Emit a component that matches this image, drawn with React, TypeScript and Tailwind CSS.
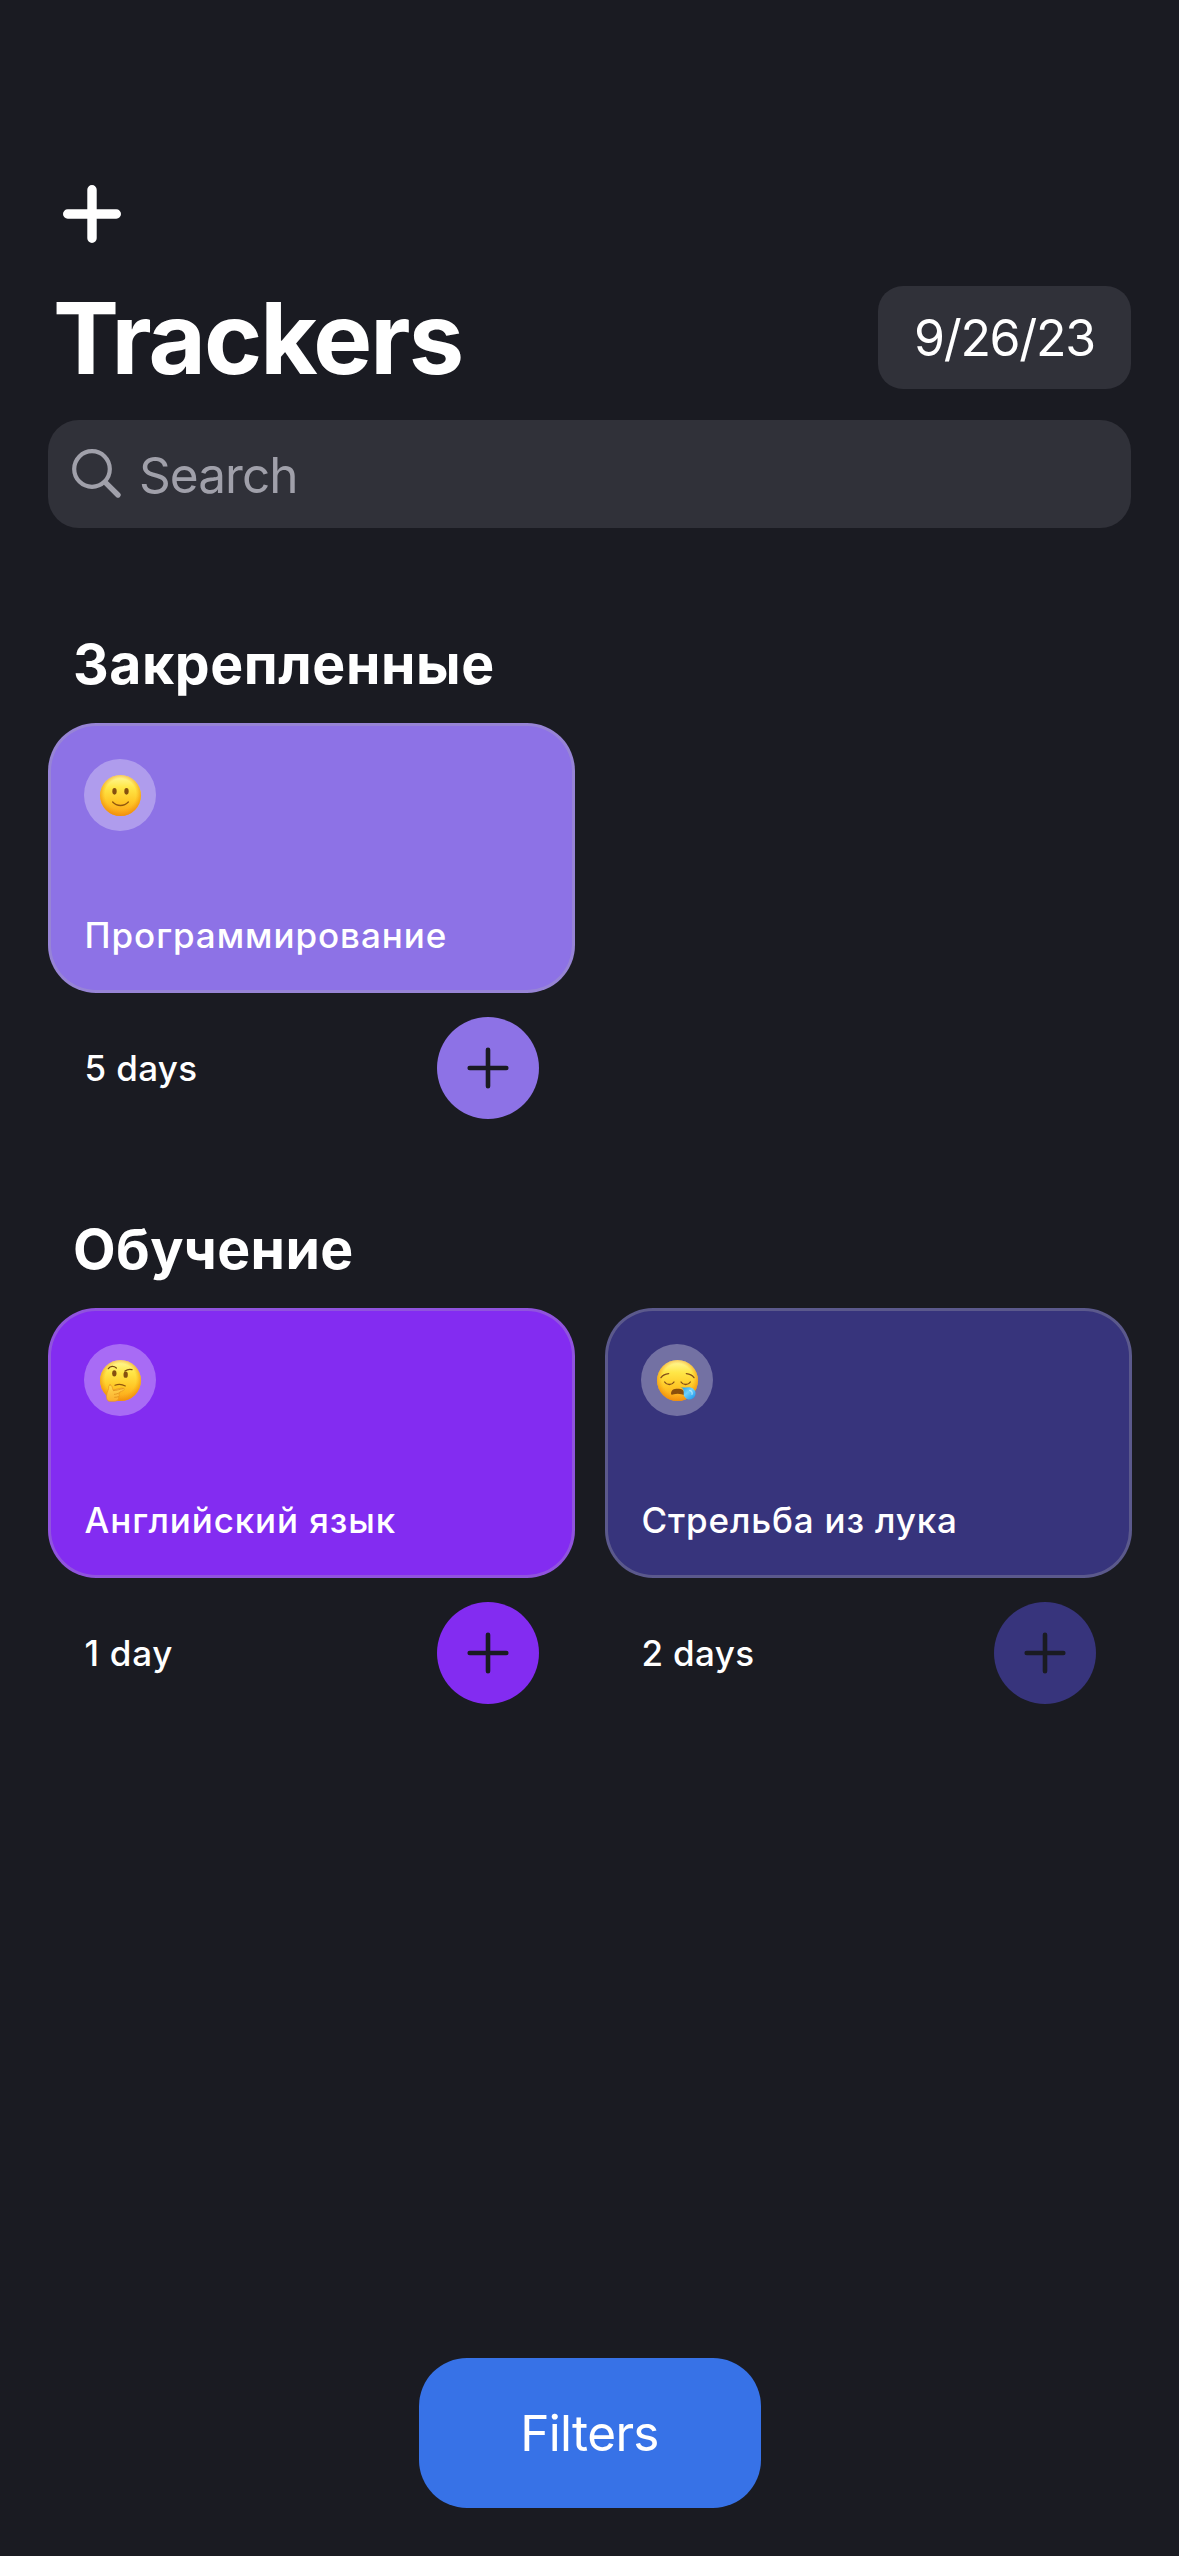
import React from "react";

type Mood = "smile" | "think" | "sleepy";

type Tracker = {
  name: string;
  nameClass: string;
  days: string;
  daysClass: string;
  mood: Mood;
  fill: string;
};

const pinned: Tracker[] = [
  {
    name: "Программирование",
    nameClass: "tracking-[0.93px]",
    days: "5 days",
    daysClass: "tracking-[0.36px]",
    mood: "smile",
    fill: "bg-[#8d72e6]",
  },
];

const study: Tracker[] = [
  {
    name: "Английский язык",
    nameClass: "tracking-[0.88px]",
    days: "1 day",
    daysClass: "tracking-[0.75px]",
    mood: "think",
    fill: "bg-[#832cf1]",
  },
  {
    name: "Стрельба из лука",
    nameClass: "tracking-[0.82px]",
    days: "2 days",
    daysClass: "tracking-[0.36px]",
    mood: "sleepy",
    fill: "bg-[#37347c]",
  },
];

function Face({ mood }: { mood: Mood }) {
  const base = `${mood}-base`;
  const edge = `${mood}-edge`;
  const tear = `${mood}-tear`;
  const hand = `${mood}-hand`;
  return (
    <svg viewBox="0 0 216 216" className="size-full" fill="none" strokeLinecap="round">
      <defs>
        <linearGradient id={base} x1="0" y1="0" x2="0" y2="1">
          <stop offset="0" stopColor="#fff9a0" />
          <stop offset="0.3" stopColor="#ffe748" />
          <stop offset="0.65" stopColor="#ffc726" />
          <stop offset="1" stopColor="#fb9f18" />
        </linearGradient>
        <radialGradient id={edge} cx="0.5" cy="0.47" r="0.54">
          <stop offset="0.7" stopColor="#f39a10" stopOpacity="0" />
          <stop offset="1" stopColor="#ee8a08" stopOpacity="0.85" />
        </radialGradient>
        <linearGradient id={tear} x1="0" y1="0" x2="1" y2="1">
          <stop offset="0" stopColor="#1f97ec" />
          <stop offset="0.45" stopColor="#6fd2fc" />
          <stop offset="1" stopColor="#128eea" />
        </linearGradient>
        <linearGradient id={hand} x1="0" y1="0" x2="0" y2="1">
          <stop offset="0" stopColor="#ffd84f" />
          <stop offset="1" stopColor="#fbae2c" />
        </linearGradient>
      </defs>
      <circle cx="109.5" cy="109.5" r="61.5" fill={`url(#${base})`} />
      <circle cx="109.5" cy="109.5" r="61.5" fill={`url(#${edge})`} />
      {mood === "smile" && (
        <>
          <ellipse cx="91.5" cy="97" rx="6.5" ry="10" fill="#85500f" />
          <ellipse cx="127.5" cy="97" rx="6.5" ry="10" fill="#85500f" />
          <path d="M86 129c13 14 34 14 47 0" stroke="#91570e" strokeWidth="4" />
        </>
      )}
      {mood === "think" && (
        <>
          <ellipse cx="91" cy="88" rx="6.5" ry="9.5" fill="#85500f" />
          <ellipse cx="125" cy="92" rx="6.5" ry="9.5" fill="#85500f" />
          <path d="M73 74c6-8 16-9 24-2M123 81c7-5 14-6 21-4" stroke="#7a4a10" strokeWidth="4" />
          <path d="M93 124c9-4 22-3 31 2" stroke="#91570e" strokeWidth="3.5" />
          <path
            d="M78 123c5-1 7 6 9 15 12-2 25-8 33-5 4 3-1 7-13 11 1 4-1 4-2 7 2 5 0 6-1 8 1 8-5 13-14 13H78c-9 0-11-8-10-18 1-12 7-17 6-25 0-3 1-6 4-6z"
            fill={`url(#${hand})`}
            stroke="#e8921c"
            strokeWidth="2"
          />
          <path d="M88 140c10 0 20-5 29-6M91 151c5 0 10-2 14-4M92 160c4 0 8-1 11-2" stroke="#d98314" strokeWidth="2" />
        </>
      )}
      {mood === "sleepy" && (
        <>
          <path d="M60 101c5-7 12-11 23-12M136 89c11 1 18 5 23 12" stroke="#84501a" strokeWidth="4" />
          <path d="M71 114c6 10 22 10 28 0M120 114c6 10 22 10 28 0" stroke="#84501a" strokeWidth="4" />
          <path d="M90 150c0-13 8-16 20-16s20 3 20 16c0 3-5 2-9 1-7-2-15-2-22 0-4 1-9 2-9-1z" fill="#8a4f0c" />
          <path
            d="M119 130c12 2 22-2 32 1 12 4 15 16 11 25-5 11-21 14-29 5-8-8-3-16-6-24-1-4-5-4-8-7z"
            fill={`url(#${tear})`}
          />
          <path d="M146 139c6 1 9 7 7 12" stroke="#c8f0ff" strokeWidth="4" opacity="0.7" />
        </>
      )}
    </svg>
  );
}

function TrackerCard({ tracker }: { tracker: Tracker }) {
  return (
    <article className="w-[527px] shrink-0">
      <div
        className={`flex h-[270px] flex-col justify-between rounded-[48px] border-[3px] border-[#aeafb4]/30 px-[33px] pt-[33px] pb-[35px] ${tracker.fill}`}
      >
        <div className="size-[72px] rounded-full bg-white/30">
          <Face mood={tracker.mood} />
        </div>
        <h3 className={`ml-[0.5px] text-[35px] leading-[40px] font-medium whitespace-nowrap ${tracker.nameClass}`}>
          {tracker.name}
        </h3>
      </div>
      <div className="mt-6 flex h-[102px] items-center justify-between pr-9 pl-[36.5px]">
        <span className={`text-[35px] leading-[40px] font-medium ${tracker.daysClass}`}>{tracker.days}</span>
        <button
          aria-label="Add day"
          className={`flex size-[102px] items-center justify-center rounded-full text-[#1a1b22] ${tracker.fill}`}
        >
          <svg viewBox="0 0 42 42" className="size-[42px]" stroke="currentColor" strokeWidth="4.6" strokeLinecap="round">
            <path d="M21 2.7v36.6M2.7 21h36.6" />
          </svg>
        </button>
      </div>
    </article>
  );
}

function Section({
  title,
  titleClass,
  trackers,
}: {
  title: string;
  titleClass: string;
  trackers: Tracker[];
}) {
  return (
    <section>
      <h2 className={`ml-[25px] h-[60px] text-[55.3px] leading-[60px] font-bold ${titleClass}`}>{title}</h2>
      <div className="mt-[29px] flex gap-[30px]">
        {trackers.map((t) => (
          <TrackerCard key={t.name} tracker={t} />
        ))}
      </div>
    </section>
  );
}

export default function App() {
  return (
    <div className="flex h-[2556px] w-[1179px] flex-col overflow-hidden bg-[#1a1b22] px-12 pt-[185px] pb-12 font-['Inter',sans-serif] text-white">
      <header>
        <button aria-label="Add tracker" className="ml-[15px] block size-[58px]">
          <svg viewBox="0 0 58 58" className="size-full" stroke="currentColor" strokeWidth="9.4" strokeLinecap="round">
            <path d="M29 4.7v48.6M4.7 29h48.6" />
          </svg>
        </button>
        <div className="mt-[43px] flex h-[103px] items-center justify-between">
          <h1 className="ml-[5px] pt-0.5 text-[99px] leading-[103px] font-bold tracking-[-2px]">Trackers</h1>
          <div className="h-[103px] w-[253px] rounded-[25px] bg-[#303139] pl-9 text-[50px] leading-[105px] tracking-[-1.3px]">
            9/26/23
          </div>
        </div>
        <div className="mt-[31px] flex h-[108px] items-center rounded-[31px] bg-[#303139] text-[#a0a0aa]">
          <svg
            viewBox="0 0 50 50"
            className="ml-6 size-[50px]"
            fill="none"
            stroke="currentColor"
            strokeLinecap="round"
          >
            <circle cx="20" cy="20" r="17.8" strokeWidth="4.2" />
            <path d="M33.3 33.3 46 46" strokeWidth="5.4" />
          </svg>
          <span className="ml-[17px] pt-px text-[49.5px] leading-[108px] tracking-[-0.94px]">Search</span>
        </div>
      </header>

      <main className="mt-[106px] flex grow flex-col gap-[100px]">
        <Section title="Закрепленные" titleClass="tracking-[0.6px]" trackers={pinned} />
        <Section title="Обучение" titleClass="tracking-[0.45px]" trackers={study} />
      </main>

      <button className="ml-[371px] h-[150px] w-[342px] rounded-[48px] bg-[#3772e7] pt-px pr-px text-[49.5px] leading-[149px] tracking-[-0.65px]">
        Filters
      </button>
    </div>
  );
}
